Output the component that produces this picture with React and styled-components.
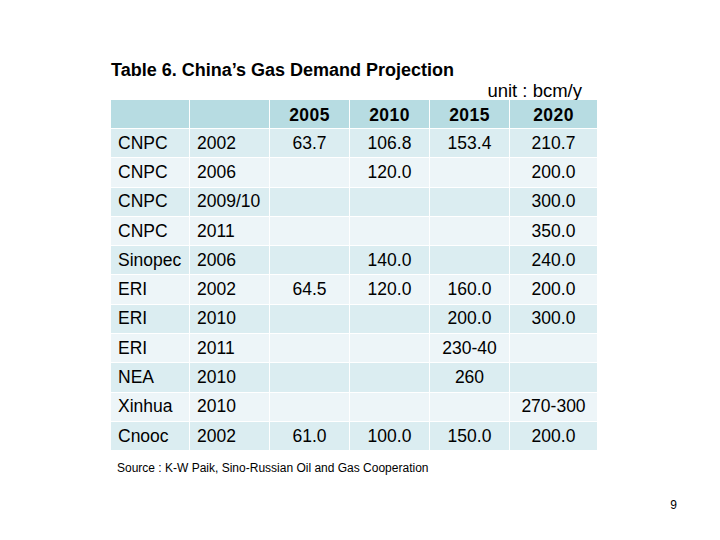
import React from 'react'
import styled, { createGlobalStyle } from 'styled-components'

const GlobalStyle = createGlobalStyle`
  body {
    margin: 0;
    background: #fff;
    font-family: "Liberation Sans", Arial, sans-serif;
    color: #000;
  }
`

const Slide = styled.div`
  width: 720px;
  height: 540px;
  box-sizing: border-box;
  padding: 59px 0 0 111px;
  display: flex;
  flex-direction: column;
  overflow: hidden;
`

const Title = styled.h1`
  margin: 0;
  font-size: 18px;
  line-height: 22px;
  font-weight: bold;
`

const Unit = styled.div`
  width: 471px;
  text-align: right;
  font-size: 18.5px;
  line-height: 19px;
`

const Grid = styled.div`
  display: grid;
  width: 486px;
  grid-template-columns: 78px 79px 79px 79px 79px 87px;
  grid-template-rows: 28px;
  grid-auto-rows: 28.3px;
  gap: 1px;
  background: #fff;
`

const rowColors = {
  head: '#b7dce2',
  odd: '#dbedf1',
  even: '#edf5f8',
}

const Cell = styled.div`
  background: ${p => rowColors[p.$tone]};
  display: flex;
  align-items: center;
  justify-content: ${p => (p.$label ? 'flex-start' : 'center')};
  padding-left: ${p => (p.$label ? '7px' : '0')};
  padding-top: ${p => (p.$tone === 'head' ? '2px' : '0')};
  font-size: 17.5px;
  font-weight: ${p => (p.$tone === 'head' ? 'bold' : 'normal')};
  letter-spacing: ${p => (p.$tone === 'head' ? '0.4px' : '0')};
  white-space: nowrap;
`

const Source = styled.div`
  margin-top: 11px;
  padding-left: 6px;
  font-size: 12px;
`

const Footer = styled.div`
  margin-top: auto;
  margin-bottom: 28px;
  padding-right: 43px;
  display: flex;
  justify-content: flex-end;
  font-size: 12px;
`

const rows = [
  ['CNPC', '2002', '63.7', '106.8', '153.4', '210.7'],
  ['CNPC', '2006', '', '120.0', '', '200.0'],
  ['CNPC', '2009/10', '', '', '', '300.0'],
  ['CNPC', '2011', '', '', '', '350.0'],
  ['Sinopec', '2006', '', '140.0', '', '240.0'],
  ['ERI', '2002', '64.5', '120.0', '160.0', '200.0'],
  ['ERI', '2010', '', '', '200.0', '300.0'],
  ['ERI', '2011', '', '', '230-40', ''],
  ['NEA', '2010', '', '', '260', ''],
  ['Xinhua', '2010', '', '', '', '270-300'],
  ['Cnooc', '2002', '61.0', '100.0', '150.0', '200.0'],
]

const header = ['', '', '2005', '2010', '2015', '2020']

export default function App() {
  return (
    <>
      <GlobalStyle />
      <Slide>
        <Title>Table 6. China’s Gas Demand Projection</Title>
        <Unit>unit : bcm/y</Unit>
        <Grid>
          {header.map((h, i) => (
            <Cell key={'h' + i} $tone="head">{h}</Cell>
          ))}
          {rows.map((r, ri) =>
            r.map((v, ci) => (
              <Cell
                key={ri + '-' + ci}
                $tone={ri % 2 === 0 ? 'odd' : 'even'}
                $label={ci < 2}
              >
                {v}
              </Cell>
            ))
          )}
        </Grid>
        <Source>Source : K-W Paik, Sino-Russian Oil and Gas Cooperation</Source>
        <Footer>9</Footer>
      </Slide>
    </>
  )
}
